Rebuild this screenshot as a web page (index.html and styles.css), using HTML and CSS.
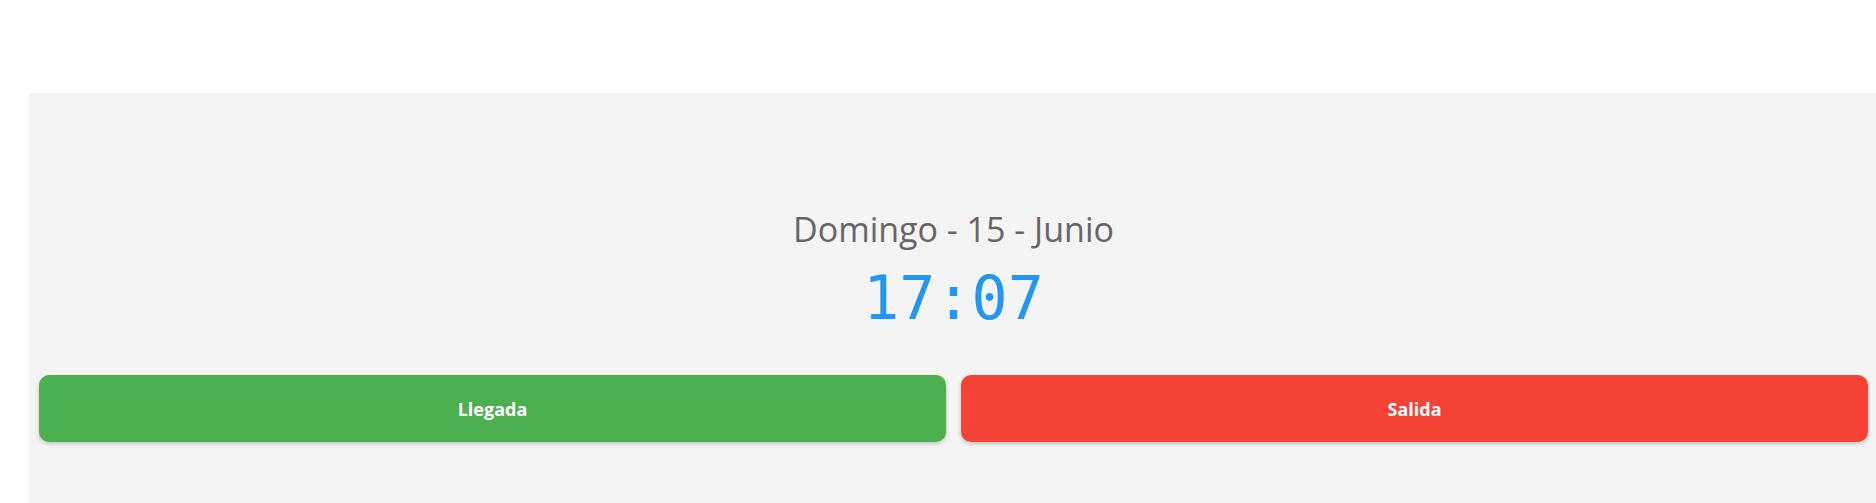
FILE: index.html
```html
<!DOCTYPE html>
<html lang="es">
<head>
<meta charset="utf-8">
<title>Reloj</title>
<link rel="stylesheet" href="styles.css">
</head>
<body>
<main class="panel">
  <div class="date">Domingo - 15 - Junio</div>
  <div class="time">17:07</div>
  <div class="actions">
    <button class="btn btn-in">Llegada</button>
    <button class="btn btn-out">Salida</button>
  </div>
</main>
</body>
</html>
```
FILE: styles.css
```css
html, body {
  margin: 0;
  padding: 0;
  background: #ffffff;
  overflow: hidden;
}
body {
  font-family: "Open Sans", "Noto Sans", sans-serif;
}
.panel {
  margin: 93px 0 0 29px;
  background: #f4f4f4;
  height: 410px;
  box-sizing: border-box;
  padding: 116px 8px 0 10px;
  display: flex;
  flex-direction: column;
  align-items: stretch;
}
.date {
  text-align: center;
  font-size: 34px;
  line-height: 40px;
  color: #666666;
}
.time {
  text-align: center;
  font-family: "DejaVu Sans Mono", monospace;
  font-size: 60px;
  line-height: 70px;
  color: #2196f3;
  margin-top: 14px;
}
.actions {
  display: flex;
  gap: 15px;
  margin-top: 42px;
}
.btn {
  flex: 1;
  height: 67px;
  border: none;
  border-radius: 10px;
  color: #ffffff;
  font-family: "Open Sans", "Noto Sans", sans-serif;
  font-weight: 700;
  font-size: 18px;
  box-shadow: 0 2px 4px rgba(0, 0, 0, 0.2);
  cursor: pointer;
}
.btn-in { background: #4caf50; }
.btn-out { background: #f44336; }
```
